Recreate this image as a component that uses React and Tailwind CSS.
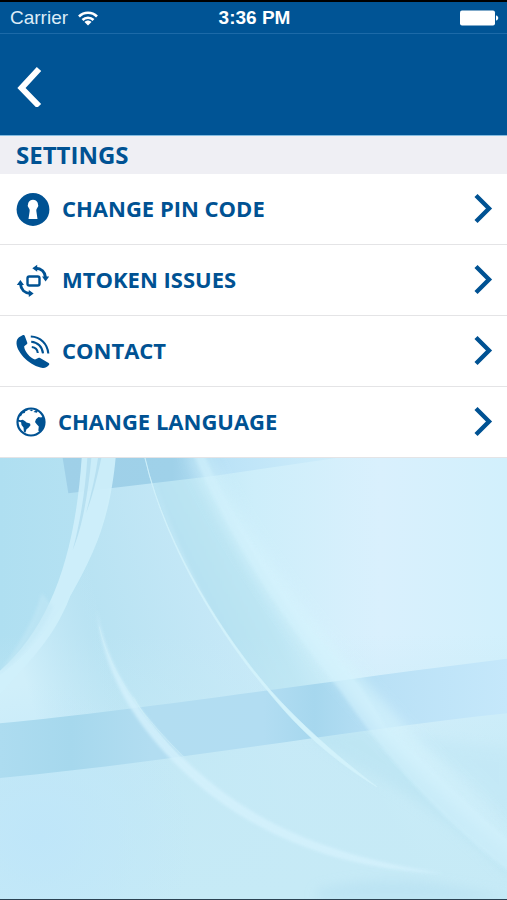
import React from "react";

function KeyholeIcon() {
  return (
    <svg className="size-[34px] shrink-0" viewBox="0 0 34 34" aria-hidden="true">
      <circle cx="17" cy="17.500" r="16.400" fill="#005293" />
      <path d="M17 7.800a5.200 5.200 0 0 0-4.100 8.400c.8 1 .9 2 .7 3.300l-1.100 7.500h9l-1.100-7.500c-.2-1.300-.1-2.300.7-3.300A5.200 5.200 0 0 0 17 7.800z" fill="#fff" />
    </svg>
  );
}

function RotateIcon() {
  return (
    <svg className="size-[34px] shrink-0" viewBox="0 0 34 34" fill="none" stroke="#005293" aria-hidden="true">
      <rect x="11.500" y="13.500" width="12" height="9" rx="1.800" strokeWidth="2.400" />
      <path d="M19.500 5.200c5.800.2 9.600 3.800 10 9.300M4.500 21c.4 5.600 4.200 9.200 10 9.400" strokeWidth="3" />
      <path d="M21.200 1.800v7l-4.900-3.500zM26 13.600h7.200l-3.600 5zM.800 22h7.200l-3.600-5zM12.800 26.900v7l4.900-3.500z" fill="#005293" stroke="none" />
    </svg>
  );
}

function PhoneIcon() {
  return (
    <svg className="size-[34px] shrink-0" viewBox="0 0 34 34" fill="none" stroke="#005293" aria-hidden="true">
      <path
        d="M3 3.200 7 1.100c.8-.4 1.300-.2 1.700.6l2.500 6.800c.3.800.1 1.300-.5 1.800l-2.500 2c-.3 4.200 6 12 10.800 13.300l3.300-1.700c.7-.4 1.200-.3 1.800.1l8.500 5c.7.500.9 1 .5 1.700-1.300 2.100-3.600 3.300-6.300 3.200C14.500 32.500 1 19 .500 9.500.400 6.800 1.300 4.500 3 3.200z"
        fill="#005293"
        stroke="none"
      />
      <path d="M14.800 2.500c9.500.3 16.800 7.200 17.500 17M15.200 7.700c6.500.4 11.200 5.200 11.800 11.700M15.800 13c3.600.3 5.600 2.600 6 6" strokeWidth="2.100" />
    </svg>
  );
}

function GlobeIcon() {
  return (
    <svg className="size-[30px] shrink-0" viewBox="0 0 30 30" aria-hidden="true">
      <circle cx="15" cy="15" r="13.500" fill="#fff" stroke="#005293" strokeWidth="2.200" />
      <path d="M3.500 9 6 5.200l4-2.900 2.600-.5-1.200 1.800-2 .6-.6 1.800-2.300.6-1.500 2.600zM13.500 3l2-.6 1.500.8-1.500 1zM17.500 5l2.200-1.800 2.200.6-1 2z" fill="#005293" />
      <path d="M2 12.500l2.500.8 2.300-.6 2.400 1.500 1.300 1.300 3.500 1.100.5 1.600-2 2.500-2 1.600-1 3.200-1.600-.7-.4-4.300-2-2.600-.4-2.600L2 14.500z" fill="#005293" />
      <path d="M20 12.300l2.500-2.200 2.700.5 1.300-1 1.500 2.400.4 4-1.400 5-3.500 3.700-1.200-1.200.5-4-2.300-2.500-1.500-2z" fill="#005293" />
    </svg>
  );
}

function Chevron() {
  return (
    <svg className="h-[32px] w-[20px] shrink-0" viewBox="0 0 20 32" fill="none" aria-hidden="true">
      <path d="M3 2.500 16 15.500 3 28.500" stroke="#005293" strokeWidth="4.400" />
    </svg>
  );
}

function Backdrop() {
  return (
    <svg className="absolute inset-0 size-full" viewBox="0 24 1521 1323" preserveAspectRatio="none" aria-hidden="true">
      <defs>
        <linearGradient id="base" x1="0" y1="0" x2="1" y2="0">
          <stop offset="0" stopColor="#afdff1" />
          <stop offset=".3" stopColor="#b9e3f3" />
          <stop offset=".5" stopColor="#cdeefa" />
          <stop offset=".75" stopColor="#d9f0fd" />
          <stop offset="1" stopColor="#d2f0fc" />
        </linearGradient>
        <linearGradient id="lower" x1="0" y1="0" x2="0" y2="1">
          <stop offset=".4" stopColor="#c6eaf6" stopOpacity="0" />
          <stop offset=".7" stopColor="#c6eaf6" stopOpacity=".8" />
          <stop offset="1" stopColor="#c6eaf6" />
        </linearGradient>
        <linearGradient id="veil" x1="250" y1="500" x2="720" y2="380" gradientUnits="userSpaceOnUse">
          <stop offset="0" stopColor="#b7e2f2" />
          <stop offset="1" stopColor="#c8e9f8" />
        </linearGradient>
        <linearGradient id="valley" x1="620" y1="580" x2="900" y2="440" gradientUnits="userSpaceOnUse">
          <stop offset="0" stopColor="#b4e0f1" />
          <stop offset=".6" stopColor="#bce5f3" />
          <stop offset="1" stopColor="#d0effb" />
        </linearGradient>
        <linearGradient id="skirt" x1="60" y1="640" x2="340" y2="560" gradientUnits="userSpaceOnUse">
          <stop offset="0" stopColor="#d0effa" />
          <stop offset="1" stopColor="#bfe5f5" stopOpacity="0" />
        </linearGradient>
        <linearGradient id="ribbon" x1="0" y1="0" x2="1" y2="0">
          <stop offset="0" stopColor="#addcf0" />
          <stop offset=".14" stopColor="#a6d8ed" />
          <stop offset=".3" stopColor="#b2ddf1" />
          <stop offset=".52" stopColor="#b2ddf2" />
          <stop offset=".62" stopColor="#a6d7ee" />
          <stop offset=".76" stopColor="#bae1f6" />
          <stop offset="1" stopColor="#c5e8fb" />
        </linearGradient>
        <linearGradient id="topRibbon" x1="190" y1="0" x2="1010" y2="0" gradientUnits="userSpaceOnUse">
          <stop offset="0" stopColor="#9fd0e8" />
          <stop offset=".4" stopColor="#9fd1e9" />
          <stop offset=".6" stopColor="#bce3f7" />
          <stop offset="1" stopColor="#ceedfb" />
        </linearGradient>
        <radialGradient id="pool" cx="120" cy="1160" r="460" gradientUnits="userSpaceOnUse">
          <stop offset="0" stopColor="#bfe6f9" />
          <stop offset="1" stopColor="#bfe6f9" stopOpacity="0" />
        </radialGradient>
        <linearGradient id="strand" x1="0" y1="24" x2="0" y2="1300" gradientUnits="userSpaceOnUse">
          <stop offset="0" stopColor="#d6f4fd" stopOpacity=".6" />
          <stop offset=".6" stopColor="#d6f4fd" />
          <stop offset="1" stopColor="#d3f1fc" stopOpacity=".4" />
        </linearGradient>
        <filter id="soft" x="-200" y="-100" width="2000" height="1600" filterUnits="userSpaceOnUse">
          <feGaussianBlur stdDeviation="18" />
        </filter>
        <filter id="edge" x="-200" y="-100" width="2000" height="1600" filterUnits="userSpaceOnUse">
          <feGaussianBlur stdDeviation="5" />
        </filter>
      </defs>
      <rect y="24" width="1521" height="1323" fill="url(#base)" />
      <path d="M440 0H600C700 230 850 480 1030 690C1200 880 1370 1040 1521 1180V1400H1300C1000 1000 620 640 440 0z" fill="url(#valley)" filter="url(#edge)" />
      <path d="M340 24H435C500 300 680 570 810 720C900 820 1000 910 1130 1010L1300 1347H0V680C240 480 320 260 340 24z" fill="url(#veil)" />
      <rect y="24" width="1521" height="1323" fill="url(#lower)" />
      <path d="M0 675C120 590 190 470 260 330C300 500 320 640 420 780L0 825z" fill="url(#skirt)" />
      <rect y="700" width="700" height="647" fill="url(#pool)" />
      <path d="M930 860C1150 1000 1330 1080 1540 1290V1200C1380 1080 1220 940 1100 820z" fill="#b9e3f2" opacity=".6" filter="url(#soft)" />
      <path d="M1180 850C1300 900 1430 970 1540 1130V900z" fill="#bfe6f5" opacity=".45" filter="url(#soft)" />
      <path d="M950 1320C1150 1270 1300 1290 1540 1350H950z" fill="#b8e1f2" opacity=".7" filter="url(#soft)" />
      <path d="M188 24H1010L640 78 205 130z" fill="url(#topRibbon)" />
      <path d="M0 820C420 780 1000 690 1521 626V790C1050 840 520 935 0 984z" fill="url(#ribbon)" />
      <path d="M590 0C690 230 880 500 1050 690C1210 880 1380 1040 1560 1220" fill="none" stroke="url(#strand)" strokeWidth="70" opacity=".65" filter="url(#soft)" />
      <path d="M575 0H606C710 245 900 510 1075 700L1160 830C1300 960 1420 1080 1560 1200V1290C1330 1120 1170 940 1020 720C860 520 690 270 575 0z" fill="#d3f2fd" opacity=".5" filter="url(#edge)" />
      <path d="M435 24C500 300 680 570 810 720C900 820 1000 910 1130 1010C990 925 890 830 806 726C676 576 498 300 435 24z" fill="#d2f2fb" stroke="#d2f2fb" strokeWidth="2" />
      <path d="M245 24H347C330 200 290 300 210 440C160 570 80 640 0 735V662C150 530 225 320 245 24z" fill="#cfeffb" opacity=".9" />
      <path d="M262 24H274C264 140 244 240 218 300C240 220 256 120 262 24zM294 24H304C290 90 274 150 258 190C274 130 286 80 294 24z" fill="#b7e0f1" />
      <path d="M125 430C100 520 50 590 0 665C70 620 130 540 160 470z" fill="#c3e8f6" opacity=".55" filter="url(#edge)" />
      <path d="M290 480C320 650 410 780 540 915C720 1090 930 1210 1330 1270C1000 1260 720 1140 520 935C390 800 310 660 290 480z" fill="#d5f2fd" opacity=".8" filter="url(#edge)" />
      <path d="M298 530C330 680 440 810 550 920M400 740C430 800 490 870 545 930" fill="none" stroke="#d0f0f9" strokeWidth="3" opacity=".6" />
    </svg>
  );
}

const items = [
  { label: "CHANGE PIN CODE", Icon: KeyholeIcon },
  { label: "MTOKEN ISSUES", Icon: RotateIcon },
  { label: "CONTACT", Icon: PhoneIcon },
  { label: "CHANGE LANGUAGE", Icon: GlobeIcon },
];

export default function App() {
  return (
    <div className="flex min-h-screen flex-col border-t-2 border-b border-t-black border-b-[#2b4252] bg-white font-['Open_Sans','Noto_Sans',sans-serif] text-[#005293]">
      <div className="grid h-8 grid-cols-3 items-center border-b border-[#1c6aa8] bg-[#005495] pr-2 pl-[10px] font-['Liberation_Sans',Arial,sans-serif] text-[19px] leading-8 text-white">
        <div className="flex items-center gap-[10px] text-[#dcecf8]">
          <span>Carrier</span>
          <svg className="h-[15px] w-5" viewBox="0 0 20 15" fill="none" stroke="#fff" strokeWidth="2.600" aria-hidden="true">
            <path d="M1 5.500c5-5 13-5 18 0M4.500 9c3-3 8-3 11 0" />
            <path d="M6.500 11c2-2 5-2 7 0L10 14.500z" fill="#fff" stroke="none" />
          </svg>
        </div>
        <span className="text-center font-bold">3:36 PM</span>
        <svg className="h-4 w-[39px] justify-self-end" viewBox="0 0 39 16" fill="#fff" aria-hidden="true">
          <rect y="0.500" width="35" height="15" rx="2" />
          <path d="M36 5.500c3 .5 3 4.500 0 5z" />
        </svg>
      </div>
      <header className="flex h-[101px] items-center bg-[#005495] px-4">
        <button type="button" aria-label="Back" className="flex h-12 w-8 items-center">
          <svg className="h-11 w-[26px]" viewBox="0 0 26 44" fill="none" aria-hidden="true">
            <path d="M23 6 5.500 25 23 43" stroke="#fff" strokeWidth="6" />
          </svg>
        </button>
      </header>
      <h1 className="h-[39px] border-t border-[#84bce0] bg-[#efeff4] px-4 text-[24px] leading-[38px] font-bold">SETTINGS</h1>
      <ul>
        {items.map(({ label, Icon }) => (
          <li key={label} className="h-[71px] border-b border-[#e4e4e6] bg-white">
            <button type="button" className="flex size-full items-center gap-3 pr-[14px] pl-4 text-left">
              <Icon />
              <span className="grow pb-0.5 text-[22px] leading-8 font-bold">{label}</span>
              <Chevron />
            </button>
          </li>
        ))}
      </ul>
      <div className="relative grow overflow-hidden">
        <Backdrop />
      </div>
    </div>
  );
}
